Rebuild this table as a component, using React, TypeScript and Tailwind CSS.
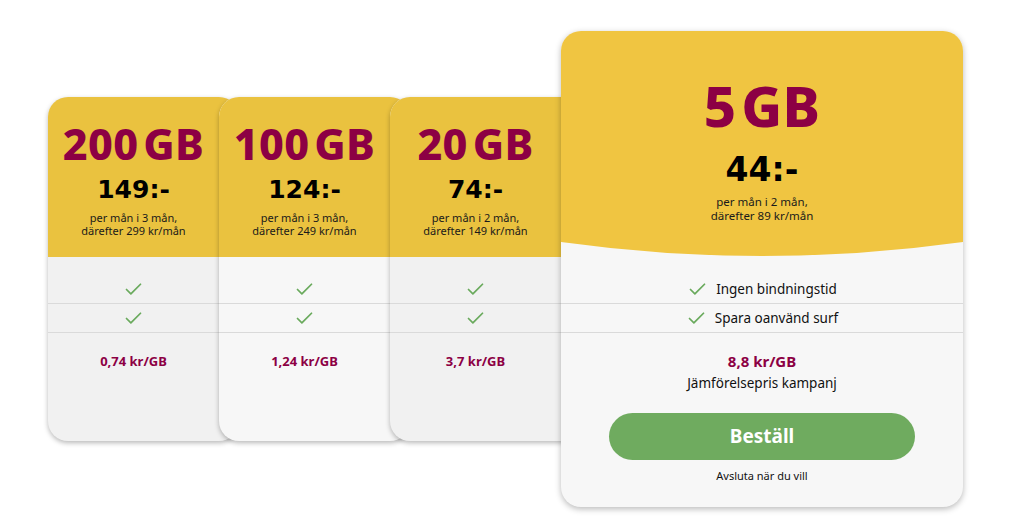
import { Check } from "lucide-react";

type Small = {
  num: string;
  price: string;
  l1: string;
  l2: string;
  per: string;
  light: boolean;
  first: boolean;
};

const cards: Small[] = [
  { num: "200", price: "149:-", l1: "per mån i 3 mån,", l2: "därefter 299 kr/mån", per: "0,74 kr/GB", light: false, first: true },
  { num: "100", price: "124:-", l1: "per mån i 3 mån,", l2: "därefter 249 kr/mån", per: "1,24 kr/GB", light: true, first: false },
  { num: "20", price: "74:-", l1: "per mån i 2 mån,", l2: "därefter 149 kr/mån", per: "3,7 kr/GB", light: false, first: false },
];

function Tick() {
  return <Check size={21} strokeWidth={2} className="text-[#6aaa5d] shrink-0" />;
}

function SmallCard({ c }: { c: Small }) {
  return (
    <div
      className={`w-[191px] h-[344px] shrink-0 rounded-[20px] overflow-hidden shadow-[0_2px_5px_rgba(0,0,0,0.28)] flex flex-col ${
        c.light ? "bg-[#f7f7f7]" : "bg-[#f1f1f1]"
      } ${c.first ? "" : "-ml-5"}`}
    >
      <div className="h-[160px] shrink-0 bg-[#eac23f] pr-5 flex flex-col items-center pt-[25px]">
        <div className="flex text-[43px] leading-[43px] font-extrabold text-[#8c0044] tracking-[0.3px] whitespace-nowrap">
          <span>{c.num}</span>
          <span className="ml-[5px]">GB</span>
        </div>
        <div className="mt-[12px] font-['DejaVu_Sans',sans-serif] text-[25px] leading-[25px] font-bold text-black">{c.price}</div>
        <div className="mt-[9px] text-[11px] leading-[13px] text-center text-[#1a1a1a]">
          {c.l1}
          <br />
          {c.l2}
        </div>
      </div>
      <div className="h-[18px] shrink-0" />
      <div className="h-[29px] shrink-0 border-b border-[#dadada] pr-5 flex items-center justify-center">
        <Tick />
      </div>
      <div className="h-[29px] shrink-0 border-b border-[#dadada] pr-5 flex items-center justify-center">
        <Tick />
      </div>
      <div className="pr-5 pt-[19px] text-center text-[13px] leading-[18px] font-bold text-[#8c0044]">{c.per}</div>
    </div>
  );
}

function BigCard() {
  return (
    <div className="w-[402px] h-[476px] shrink-0 -ml-5 rounded-[20px] overflow-hidden bg-[#f7f7f7] shadow-[0_2px_6px_rgba(0,0,0,0.28)] flex flex-col">
      <div className="h-[211px] shrink-0 bg-[#f0c541] flex flex-col items-center pt-[46px]">
        <div className="flex text-[56px] leading-[56px] font-extrabold text-[#8c0044] tracking-[0.3px] whitespace-nowrap">
          <span>5</span>
          <span className="ml-[5px]">GB</span>
        </div>
        <div className="mt-[20px] font-['DejaVu_Sans',sans-serif] text-[33px] leading-[33px] font-bold text-black">44:-</div>
        <div className="mt-[9px] text-[11.5px] leading-[14px] text-center text-[#1a1a1a]">
          per mån i 2 mån,
          <br />
          därefter 89 kr/mån
        </div>
      </div>
      <svg className="block shrink-0" width="402" height="14" viewBox="0 0 402 14" preserveAspectRatio="none">
        <path d="M0 0 H402 Q201 28 0 0 Z" fill="#f0c541" />
      </svg>
      <div className="h-[19px] shrink-0" />
      <div className="h-[29px] shrink-0 border-b border-[#dadada] flex items-center justify-center gap-[8px]">
        <Tick />
        <span className="text-[13.5px] text-[#111]">Ingen bindningstid</span>
      </div>
      <div className="h-[29px] shrink-0 border-b border-[#dadada] flex items-center justify-center gap-[8px]">
        <Tick />
        <span className="text-[13.5px] text-[#111]">Spara oanvänd surf</span>
      </div>
      <div className="pt-[18px] text-center text-[15px] leading-[20px] font-bold text-[#8c0044]">8,8 kr/GB</div>
      <div className="mt-[3px] text-center text-[13.5px] leading-[18px] text-[#111]">Jämförelsepris kampanj</div>
      <div className="mt-[21px] flex justify-center">
        <button className="w-[306px] h-[47px] rounded-full bg-[#6fab5f] text-white text-[19px] font-bold">Beställ</button>
      </div>
      <div className="mt-[9px] text-center text-[11px] leading-[14px] text-[#111]">Avsluta när du vill</div>
    </div>
  );
}

export default function App() {
  return (
    <div className="w-[1024px] h-[522px] bg-white overflow-hidden font-['Noto_Sans',sans-serif] pt-[31px] pl-[48px]">
      <div className="flex items-center h-[476px]">
        {cards.map((c) => (
          <SmallCard key={c.num} c={c} />
        ))}
        <BigCard />
      </div>
    </div>
  );
}
